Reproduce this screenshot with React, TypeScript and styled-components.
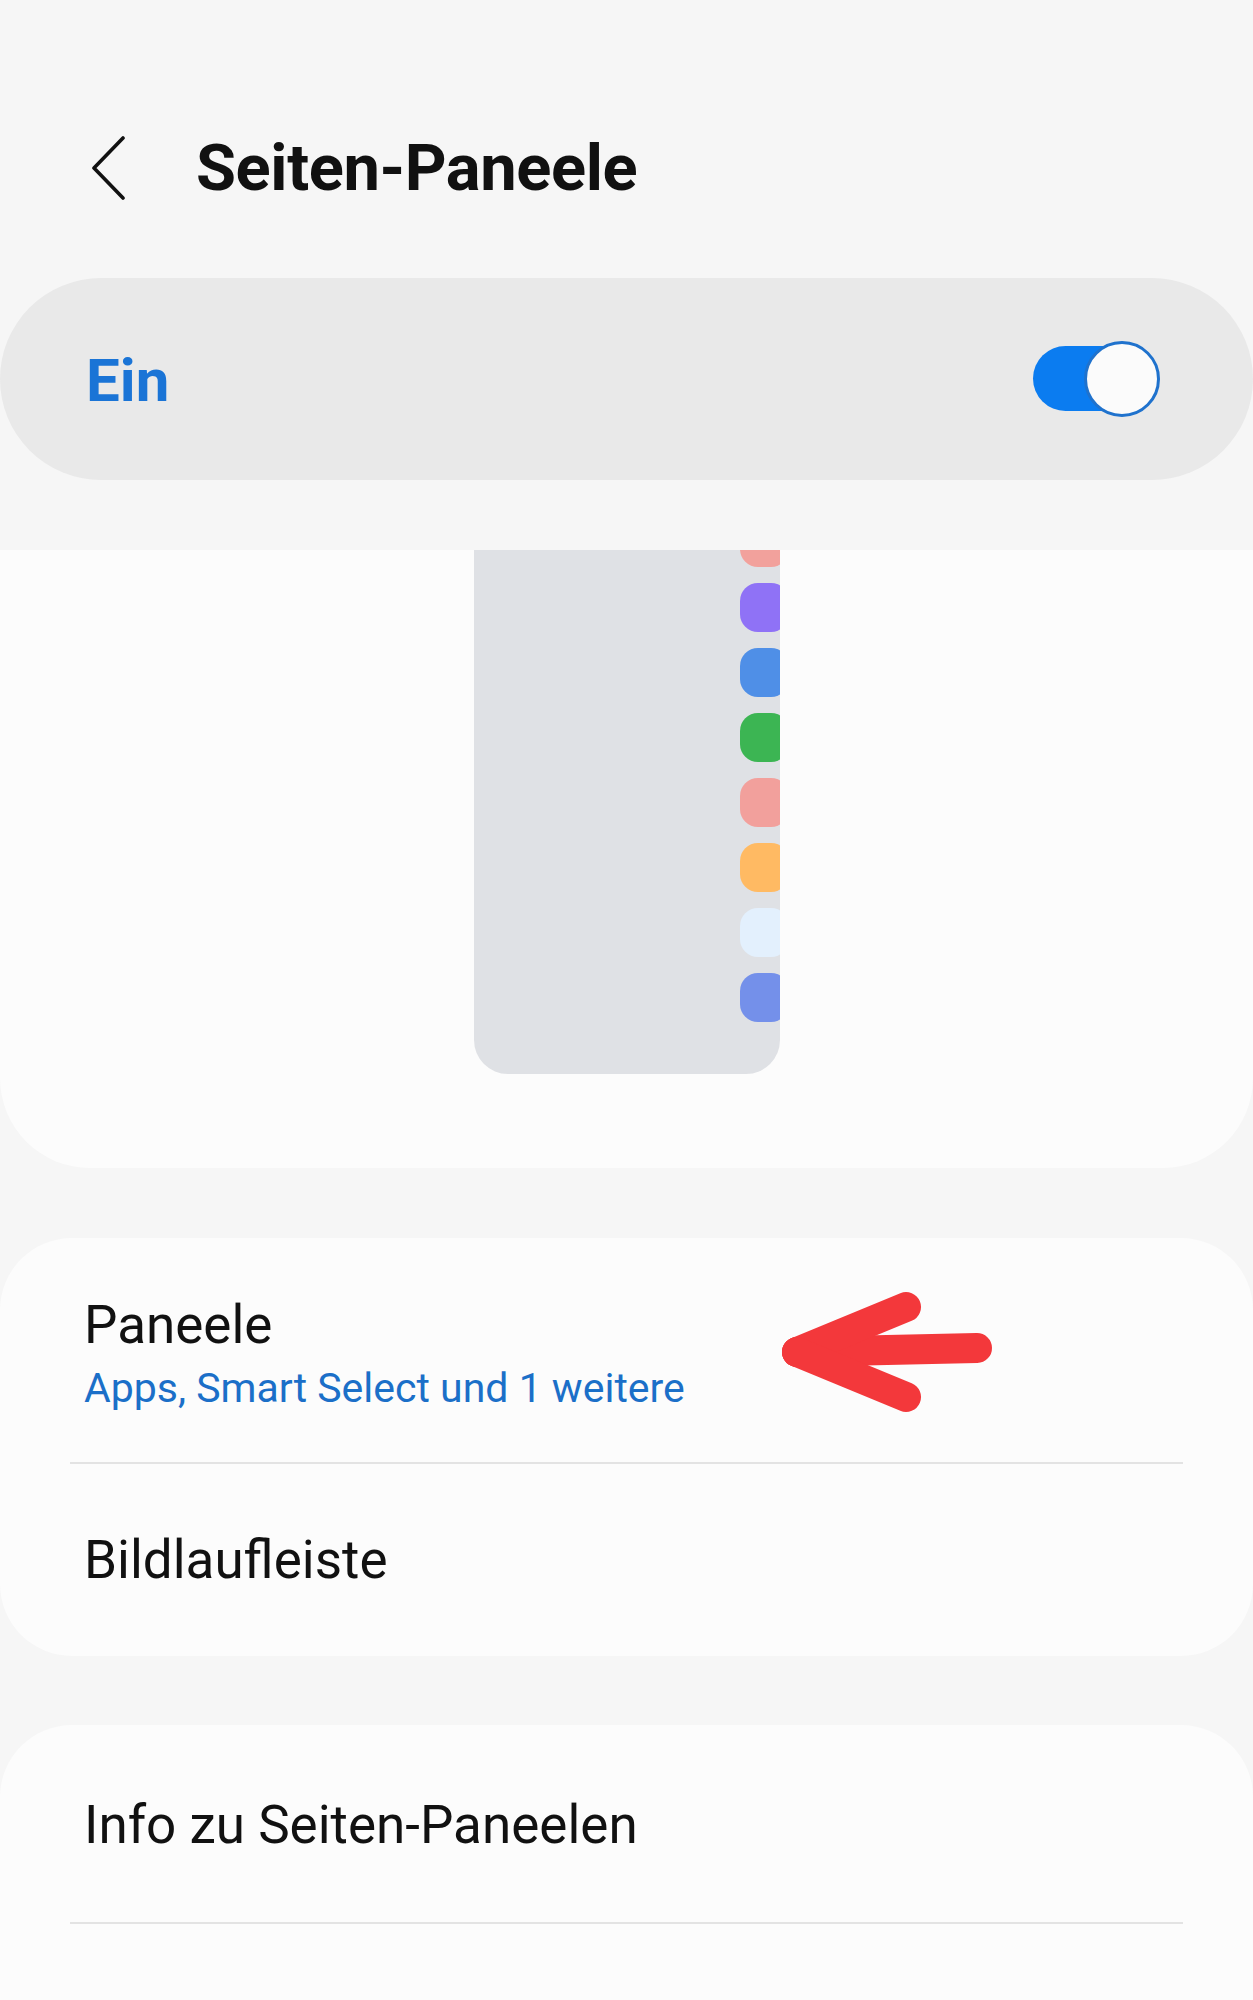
import React from "react";
import styled, { createGlobalStyle } from "styled-components";

const GlobalStyle = createGlobalStyle`
  html, body {
    margin: 0;
    padding: 0;
    background: #f6f6f6;
  }
  body {
    font-family: Roboto, "Noto Sans", "Liberation Sans", sans-serif;
    color: #111;
    overflow: hidden;
  }
  * { box-sizing: border-box; }
`;

const Page = styled.div`
  width: 1253px;
  min-height: 2000px;
  background: #f6f6f6;
  display: flex;
  flex-direction: column;
  & > * {
    flex-shrink: 0;
  }
`;

const Header = styled.header`
  height: 112px;
  margin: 112px 0 54px;
  padding-left: 92px;
  display: flex;
  align-items: center;
  gap: 71px;
`;

const BackButton = styled.button`
  border: none;
  background: none;
  padding: 0;
  width: 33px;
  height: 64px;
  display: flex;
  cursor: pointer;
`;

const Title = styled.h1`
  margin: 0;
  font-size: 65px;
  font-weight: 700;
  letter-spacing: -0.4px;
  color: #111;
  line-height: 1;
`;

const MasterCard = styled.div`
  height: 202px;
  border-radius: 101px;
  background: #e9e9e9;
  display: flex;
  align-items: center;
  justify-content: space-between;
  padding: 0 93px 0 86px;
`;

const MasterLabel = styled.span`
  font-size: 60px;
  font-weight: 700;
  color: #1a74d6;
  line-height: 1;
  margin-top: 4px;
`;

const Switch = styled.div`
  position: relative;
  width: 127px;
  height: 76px;
`;

const SwitchTrack = styled.div`
  position: absolute;
  left: 0;
  top: 5px;
  width: 112px;
  height: 65px;
  border-radius: 33px;
  background: #0b7cf0;
`;

const SwitchThumb = styled.div`
  position: absolute;
  right: 0;
  top: 0;
  width: 76px;
  height: 76px;
  border-radius: 50%;
  background: #fbfbfb;
  border: 3px solid #1f72cd;
`;

const PreviewCard = styled.section`
  margin-top: 70px;
  height: 618px;
  background: #fcfcfc;
  border-radius: 0 0 90px 90px;
  display: flex;
  justify-content: center;
`;

const Phone = styled.div`
  width: 306px;
  height: 524px;
  background: #dfe1e5;
  border-radius: 0 0 34px 34px;
  overflow: hidden;
  display: flex;
  justify-content: flex-end;
`;

const EdgeIcons = styled.div`
  margin-top: -32px;
  margin-right: -9px;
  display: flex;
  flex-direction: column;
  gap: 16px;
`;

const EdgeIcon = styled.div<{ $color: string }>`
  width: 49px;
  height: 49px;
  border-radius: 18px;
  background: ${(p) => p.$color};
`;

const Card = styled.section<{ $gap: number }>`
  margin-top: ${(p) => p.$gap}px;
  background: #fcfcfc;
  border-radius: 72px;
  display: flex;
  flex-direction: column;
  position: relative;
`;

const BottomCard = styled(Card)`
  border-radius: 72px 72px 0 0;
`;

const Row = styled.div<{ $h: number; $shift?: number }>`
  height: ${(p) => p.$h}px;
  padding-left: 84px;
  padding-top: ${(p) => p.$shift ?? 0}px;
  display: flex;
  flex-direction: column;
  justify-content: center;
`;

const RowTitle = styled.div`
  font-size: 53px;
  font-weight: 400;
  color: #111;
  line-height: 60px;
`;

const RowSub = styled.div`
  font-size: 41px;
  font-weight: 400;
  color: #1b6fc8;
  line-height: 48px;
  margin-top: 9px;
`;

const Divider = styled.hr`
  margin: 0 70px;
  border: none;
  height: 2px;
  background: #e3e3e3;
`;

const Annotation = styled.svg`
  position: absolute;
  left: 781px;
  top: 53px;
  width: 215px;
  height: 125px;
  overflow: visible;
`;

const iconColors = [
  "#f2a19c",
  "#8f72f6",
  "#4f8fe7",
  "#3cb553",
  "#f2a09c",
  "#ffba63",
  "#e3f0fd",
  "#7490ea",
];

export default function App() {
  return (
    <Page>
      <GlobalStyle />
      <Header>
        <BackButton aria-label="Zurück">
          <svg width="33" height="64" viewBox="0 0 33 64" fill="none">
            <polyline
              points="31,2 2,32 31,62"
              stroke="#111"
              strokeWidth="3.6"
              strokeLinecap="round"
              strokeLinejoin="round"
            />
          </svg>
        </BackButton>
        <Title>Seiten-Paneele</Title>
      </Header>

      <MasterCard>
        <MasterLabel>Ein</MasterLabel>
        <Switch>
          <SwitchTrack />
          <SwitchThumb />
        </Switch>
      </MasterCard>

      <PreviewCard>
        <Phone>
          <EdgeIcons>
            {iconColors.map((c, i) => (
              <EdgeIcon key={i} $color={c} />
            ))}
          </EdgeIcons>
        </Phone>
      </PreviewCard>

      <Card $gap={70}>
        <Row $h={224} $shift={6}>
          <RowTitle>Paneele</RowTitle>
          <RowSub>Apps, Smart Select und 1 weitere</RowSub>
        </Row>
        <Divider />
        <Row $h={192}>
          <RowTitle>Bildlaufleiste</RowTitle>
        </Row>
        <Annotation viewBox="0 0 215 125">
          <g
            stroke="#f3383b"
            strokeWidth="30"
            strokeLinecap="round"
            strokeLinejoin="round"
            fill="none"
          >
            <line x1="16" y1="61" x2="196" y2="57" />
            <line x1="16" y1="61" x2="125" y2="16" />
            <line x1="16" y1="61" x2="125" y2="106" />
          </g>
        </Annotation>
      </Card>

      <BottomCard $gap={69}>
        <Row $h={197} $shift={2}>
          <RowTitle>Info zu Seiten-Paneelen</RowTitle>
        </Row>
        <Divider />
        <Row $h={197} />
      </BottomCard>
    </Page>
  );
}
